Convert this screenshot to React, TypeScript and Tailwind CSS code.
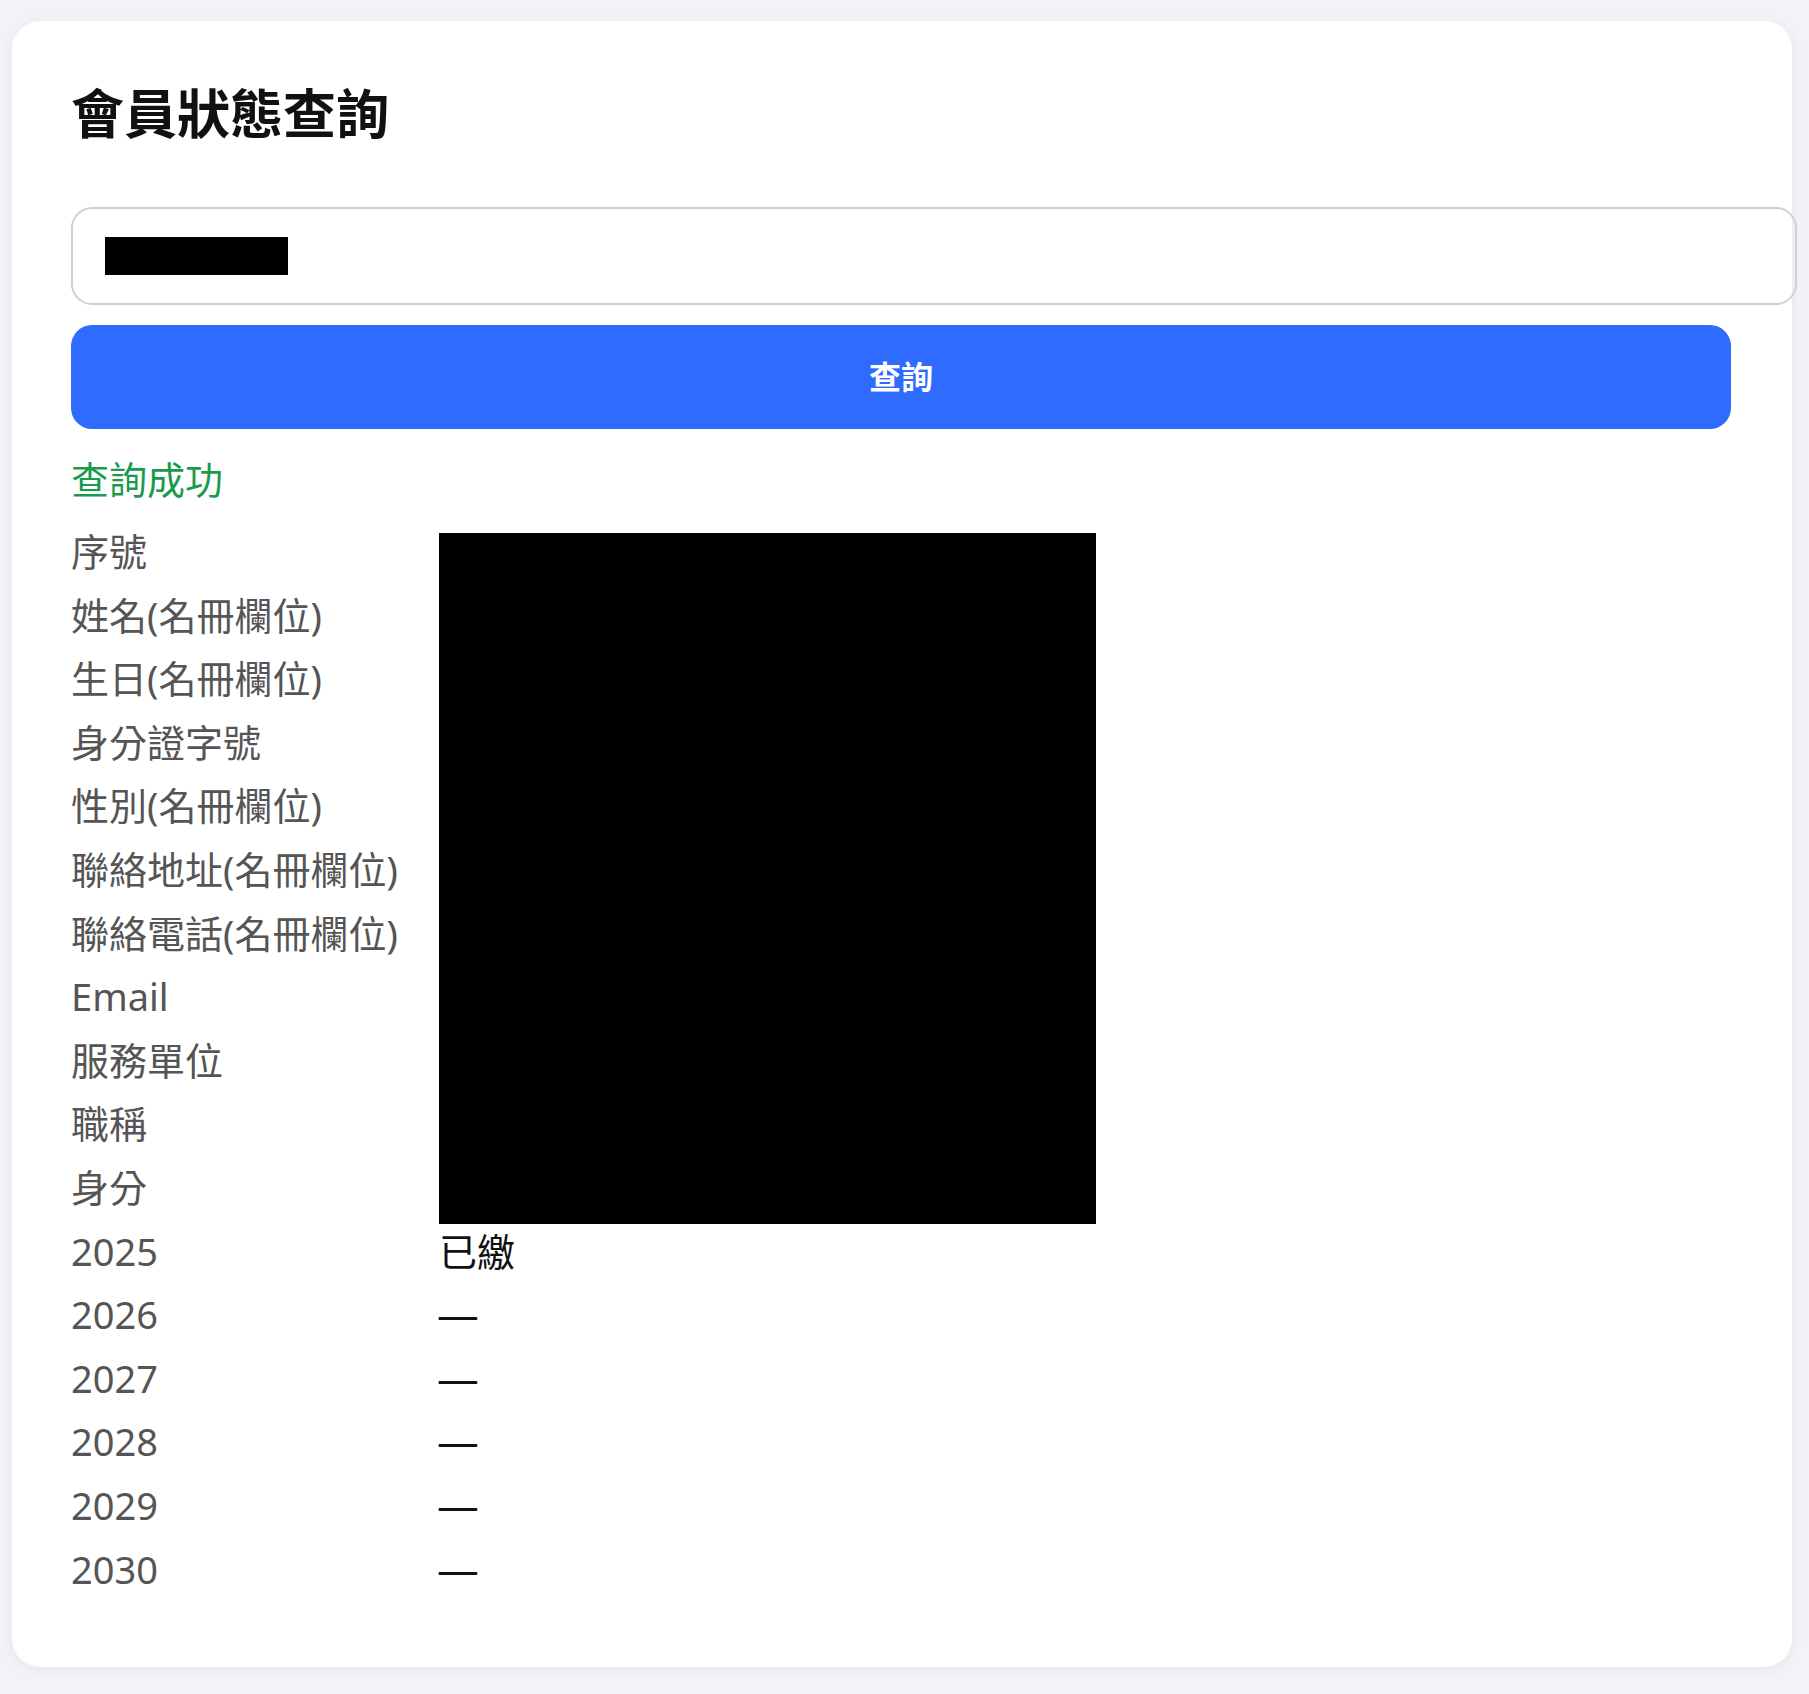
import React from 'react';

const fields = [
  '序號',
  '姓名(名冊欄位)',
  '生日(名冊欄位)',
  '身分證字號',
  '性別(名冊欄位)',
  '聯絡地址(名冊欄位)',
  '聯絡電話(名冊欄位)',
  'Email',
  '服務單位',
  '職稱',
  '身分',
];

const dues: [string, string][] = [
  ['2025', '已繳'],
  ['2026', '—'],
  ['2027', '—'],
  ['2028', '—'],
  ['2029', '—'],
  ['2030', '—'],
];

export default function MemberStatusLookup() {
  return (
    <div
      className="min-h-screen bg-[#f2f3f7] pl-[12px] pr-[17px] pt-[21px] pb-[27px]"
      style={{ fontFamily: '"Noto Sans", "Noto Sans CJK TC", sans-serif' }}
    >
      <div className="bg-white rounded-[28px] shadow-[0_2px_14px_rgba(0,0,0,0.06)] pl-[59px] pr-[61px] pt-[60px] pb-[66px]">
        <h1 className="text-[53px] leading-[66px] font-bold text-[#111]">會員狀態查詢</h1>

        {/* member id field, value blacked out */}
        <div className="mt-[60px] w-[calc(100%+66px)] h-[98px] rounded-[21px] border-2 border-[#d0d0d0] flex items-center px-[32px]">
          <span className="block w-[183px] h-[38px] bg-black" />
        </div>

        <button className="mt-[20px] w-full h-[104px] rounded-[21px] bg-[#2f6bff] text-white text-[32px] font-bold">
          查詢
        </button>

        <p className="mt-[18px] text-[38px] leading-[64px] text-[#1a9a4c]">查詢成功</p>

        <div className="mt-[9px] grid grid-cols-[368px_1fr] text-[38px] leading-[63.6px]">
          <div className="flex flex-col text-[#555]">
            {fields.map((f) => (
              <div key={f} className="whitespace-nowrap">{f}</div>
            ))}
          </div>
          <div className="flex items-start pt-[13px]">
            <div className="w-[657px] h-[691px] -mb-[5px] bg-black" />
          </div>

          {dues.map(([year, status]) => (
            <React.Fragment key={year}>
              <div className="text-[#555]">{year}</div>
              <div className={status === '—' ? 'text-[#111] -ml-[2px] scale-x-110 origin-left' : 'text-[#111]'}>
                {status}
              </div>
            </React.Fragment>
          ))}
        </div>
      </div>
    </div>
  );
}
